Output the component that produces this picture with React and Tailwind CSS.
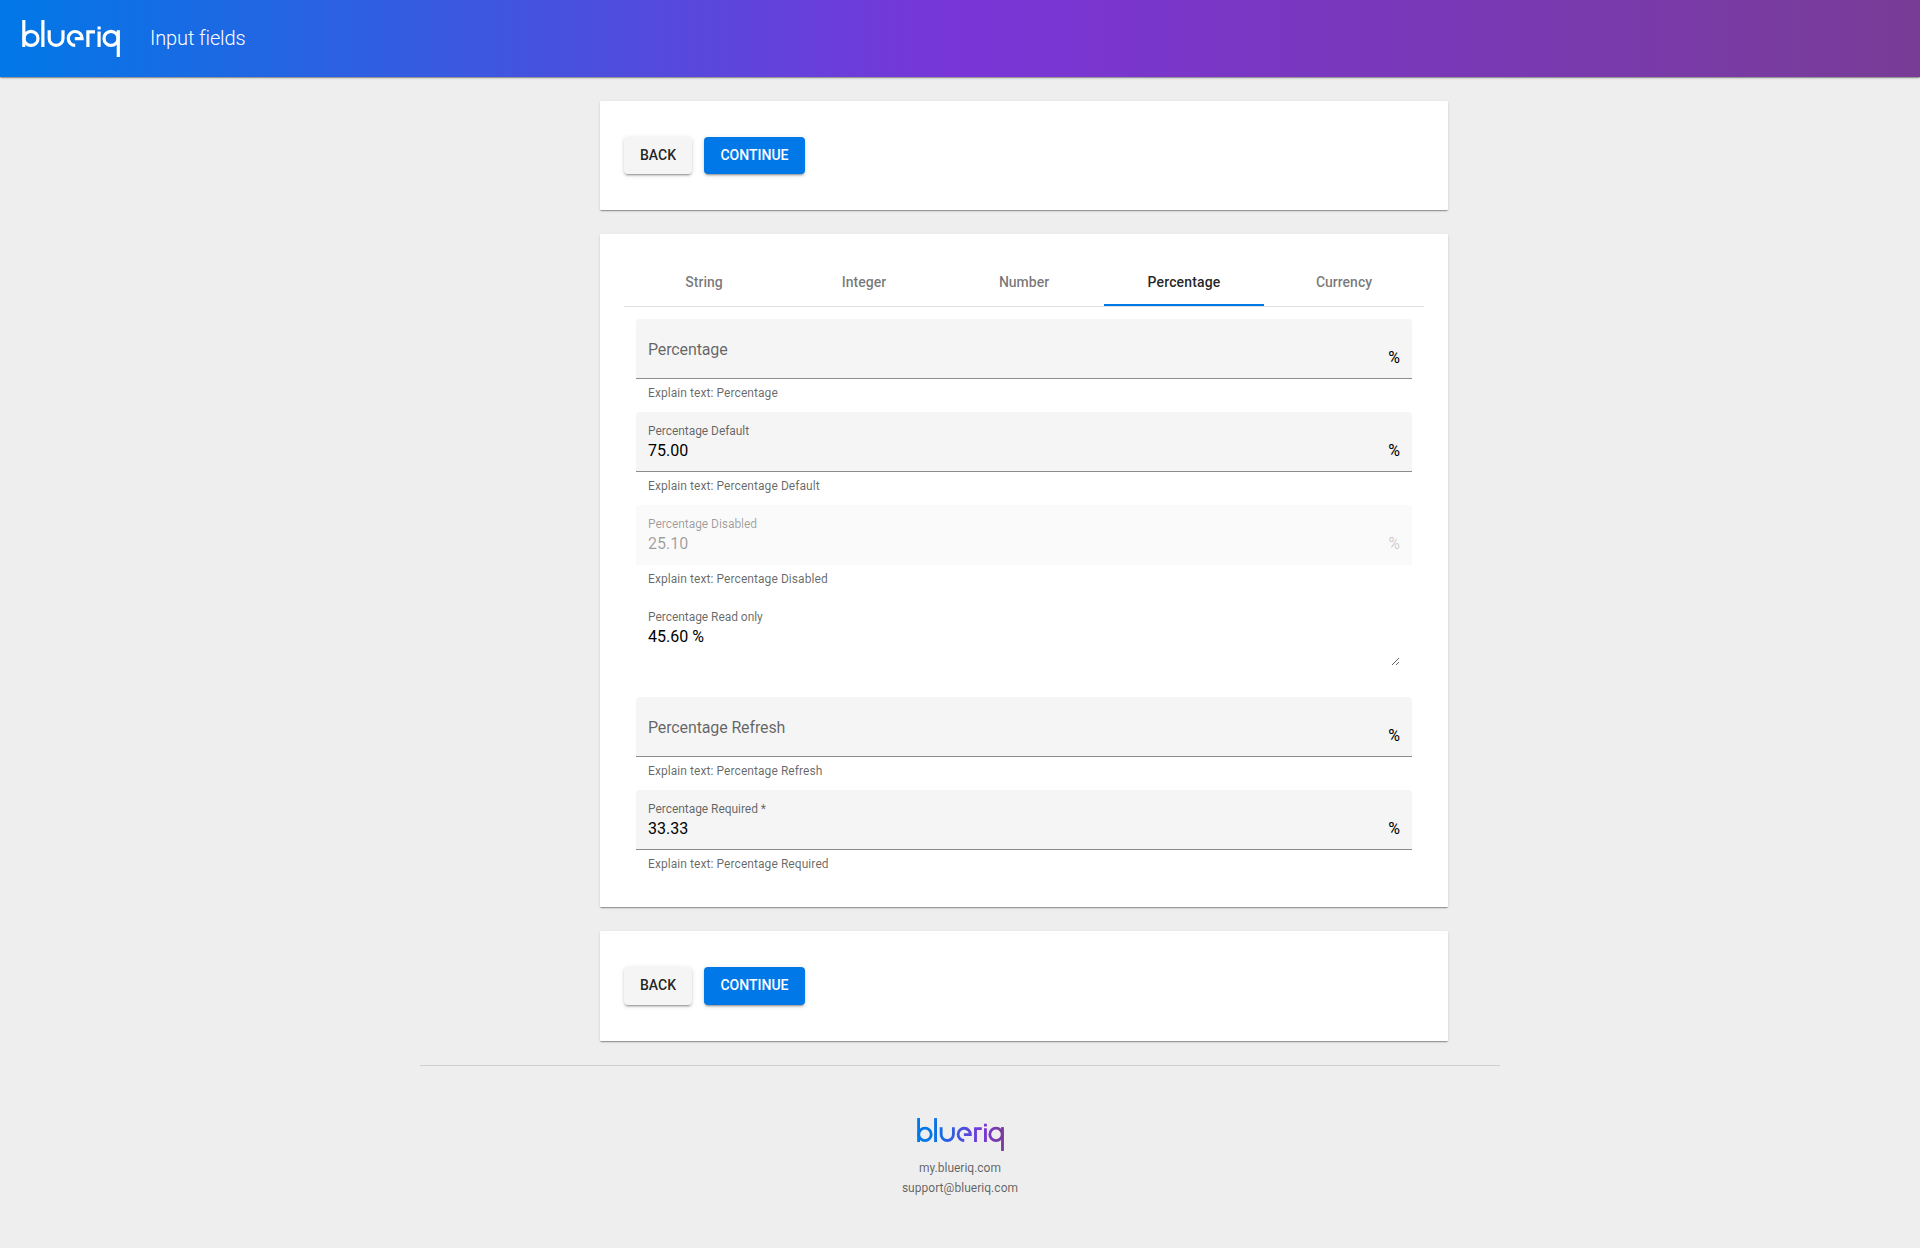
const Logo = ({ paint, className, children }) => (
  <svg className={className} viewBox="0 0 98 37" fill="none" stroke={paint} strokeWidth="3.2">
    {children}
    <path d="M1.8 0V27" />
    <circle cx="9" cy="18.4" r="7" />
    <path d="M20.9 0V27" />
    <path d="M27.2 10.2V18.4A6.9 6.9 0 0 0 41 18.4V10.2" />
    <path d="M53.2 25.3A6.9 6.9 0 1 1 60.1 18.6H52.8" />
    <path d="M65.9 27V11.9H73" />
    <path d="M77.1 11.5V27M77.1 6.5V9.4" />
    <circle cx="89" cy="18.4" r="7" />
    <path d="M96.3 10.2V37" />
  </svg>
);

const Buttons = ({ className, buttonClassName }) => (
  <section className={"flex gap-3 rounded-[1px] bg-white px-6 pt-9 shadow-[0_2px_1px_-1px_rgba(0,0,0,0.2),0_1px_1px_0_rgba(0,0,0,0.14),0_1px_3px_0_rgba(0,0,0,0.12)] " + className}>
    <button className={"w-[68px] rounded-[4px] bg-[#f5f5f5] pb-[2px] text-sm font-medium text-black/87 shadow-[0_3px_1px_-2px_rgba(0,0,0,0.2),0_2px_2px_0_rgba(0,0,0,0.14),0_1px_5px_0_rgba(0,0,0,0.12)] " + buttonClassName}>BACK</button>
    <button className={"w-[101px] rounded-[4px] bg-[#0078e7] pb-[2px] text-sm font-medium text-white shadow-[0_3px_1px_-2px_rgba(0,0,0,0.2),0_2px_2px_0_rgba(0,0,0,0.14),0_1px_5px_0_rgba(0,0,0,0.12)] " + buttonClassName}>CONTINUE</button>
  </section>
);

const Field = ({ label, value, explain, disabled }) => (
  <div className="h-[93px] px-3">
    <div className={"flex h-[60px] rounded-t-[4px] px-3 " + (disabled ? "bg-[#fafafa]" : "border-b border-[#8c8c8c] bg-[#f5f5f5]")}>
      <div className="flex-1">
        {value ? (
          <>
            <div className={"pt-3 text-xs leading-[14px] tracking-[-0.05px] " + (disabled ? "text-black/38" : "text-black/60")}>{label}</div>
            <div className={"pt-1 text-base leading-[18px] " + (disabled ? "text-black/38" : "text-black")}>{value}</div>
          </>
        ) : (
          <div className="pt-[22px] text-base leading-[18px] tracking-[-0.13px] text-black/60">{label}</div>
        )}
      </div>
      <div className={"pt-[30px] text-base leading-[18px] " + (disabled ? "text-black/20" : "text-black")}>%</div>
    </div>
    <div className="px-3 pt-[7px] text-xs leading-[14px] tracking-[0.07px] text-black/60">{explain}</div>
  </div>
);

const tabs = ["String", "Integer", "Number", "Percentage", "Currency"];

export default function App() {
  return (
    <div className="min-h-[1248px] bg-[#eeeeee] font-[Roboto,sans-serif] text-black/87">
      <header className="flex h-[77px] items-center bg-[linear-gradient(to_right,#0078e7,#7a35d8_50%,#783c96)] pl-[22px] shadow-[0_2px_1px_-1px_rgba(0,0,0,0.2),0_1px_1px_0_rgba(0,0,0,0.14),0_1px_3px_0_rgba(0,0,0,0.12)]">
        <Logo paint="white" className="h-[37px] w-[98px]" />
        <h1 className="ml-[30px] pb-0.5 text-xl font-light tracking-[-0.12px] text-white">Input fields</h1>
      </header>
      <main className="ml-[600px] flex w-[848px] flex-col gap-6 pt-6">
        <Buttons className="h-[109px]" buttonClassName="h-[37px]" />
        <section className="h-[673px] rounded-[1px] bg-white px-6 pt-6 shadow-[0_2px_1px_-1px_rgba(0,0,0,0.2),0_1px_1px_0_rgba(0,0,0,0.14),0_1px_3px_0_rgba(0,0,0,0.12)]">
          <nav className="grid h-[49px] grid-cols-5 border-b border-[#e0e0e0]">
            {tabs.map((t) => (
              <div key={t} className={"flex items-center justify-center border-b-2 pt-0.5 text-sm font-medium " + (t === "Percentage" ? "border-[#0078e7] tracking-[0.15px] text-black/87" : "border-transparent text-black/54")}>{t}</div>
            ))}
          </nav>
          <div className="pt-3">
            <Field label="Percentage" explain="Explain text: Percentage" />
            <Field label="Percentage Default" value="75.00" explain="Explain text: Percentage Default" />
            <Field label="Percentage Disabled" value="25.10" explain="Explain text: Percentage Disabled" disabled />
            <div className="h-[99px] px-6 pt-3">
              <div className="text-xs leading-[14px] tracking-[-0.05px] text-black/60">Percentage Read only</div>
              <textarea readOnly className="mt-1 block h-[38px] w-full resize-y overflow-hidden text-base leading-[18px] text-black" defaultValue="45.60 %" />
            </div>
            <Field label="Percentage Refresh" explain="Explain text: Percentage Refresh" />
            <Field label="Percentage Required *" value="33.33" explain="Explain text: Percentage Required" />
          </div>
        </section>
        <Buttons className="h-[110px]" buttonClassName="h-[38px]" />
      </main>
      <footer className="mx-auto mt-6 flex w-[1080px] flex-col items-center border-t border-[#d0d0d0] pt-[52px] text-xs leading-5 text-black/60">
        <Logo paint="url(#brand)" className="h-[33px] w-[87px]">
          <defs>
            <linearGradient id="brand" gradientUnits="userSpaceOnUse" x1="0" y1="0" x2="98" y2="0">
              <stop offset="0.15" stopColor="#0078e7" />
              <stop offset="0.75" stopColor="#7a35d8" />
              <stop offset="1" stopColor="#783c96" />
            </linearGradient>
          </defs>
        </Logo>
        <div className="mt-[7px]">my.blueriq.com</div>
        <div className="tracking-[0.04px]">support@blueriq.com</div>
      </footer>
    </div>
  );
}
